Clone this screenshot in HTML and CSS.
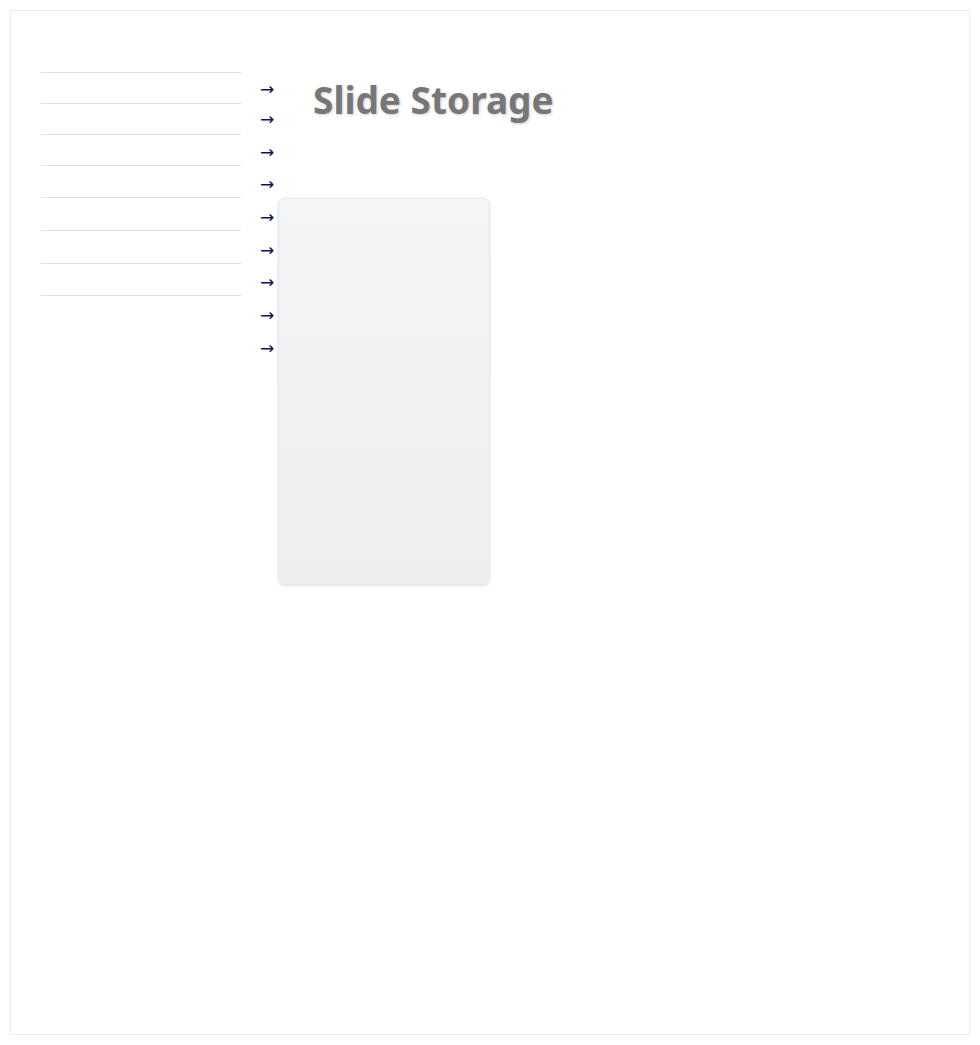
FILE: index.html
```html
<!DOCTYPE html>
<html lang="en">
	<head>
		<meta charset="UTF-8" />
		<meta name="viewport" content="width=device-width, initial-scale=1.0" />
		<title>Slide Storage</title>
		<link rel="stylesheet" href="styles.css">
	</head>
	<body>
		<div class="pagina">
			<ul class="menu">
				<li></li>
				<li></li>
				<li></li>
				<li></li>
				<li></li>
				<li></li>
				<li></li>
			</ul>
			<ul class="flechas">
				<li>&rarr;</li>
				<li>&rarr;</li>
				<li>&rarr;</li>
				<li>&rarr;</li>
				<li>&rarr;</li>
				<li>&rarr;</li>
				<li>&rarr;</li>
				<li>&rarr;</li>
				<li>&rarr;</li>
			</ul>
			<div class="contenido">
				<h1 class="titulo">Slide Storage</h1>
				<div class="tarjeta"></div>
			</div>
		</div>
	</body>
</html>
```

FILE: styles.css
```css
body {
	background-color: #fff;
	margin: 10px;
	padding: 0;
	font-family: "DejaVu Sans", sans-serif;
}
.pagina {
	display: flex;
	align-items: flex-start;
	min-height: 1025px;
	box-sizing: border-box;
	padding: 61px 0 0 30px;
	background-color: #fff;
	border: 1px solid #ececec;
	box-shadow: 0 0 8px rgba(0, 0, 0, 0.3);
}
.menu {
	list-style: none;
	margin: 0;
	padding: 0;
	width: 200px;
	border-top: 1px solid #e2e2e2;
}
.menu li {
	height: 30px;
	border-bottom: 1px solid #e2e2e2;
}
.menu li:nth-child(4),
.menu li:nth-child(7) {
	height: 31px;
}
.menu li:nth-child(5),
.menu li:nth-child(6) {
	height: 32px;
}
.flechas {
	list-style: none;
	margin: 0 0 0 19px;
	padding: 2px 0 0 0;
	width: 18px;
	color: #10105a;
	font-size: 17px;
}
.flechas li {
	height: 32.7px;
	line-height: 32.7px;
}
.flechas li:first-child {
	height: 29px;
	line-height: 30px;
}
.contenido {
	display: flex;
	flex-direction: column;
}
.titulo {
	margin: 8px 0 0 35px;
	font-family: "Noto Sans", sans-serif;
	font-weight: bold;
	font-size: 37px;
	line-height: 40px;
	color: #777;
	text-shadow: 1px 1px 3px rgba(0, 0, 0, 0.2);
}
.tarjeta {
	width: 212px;
	height: 387px;
	margin-top: 78px;
	box-sizing: border-box;
	border: 1px solid #e8e8e9;
	border-radius: 7px;
	background: linear-gradient(#f4f5f7, #eeeeef);
	box-shadow: 0 1px 3px rgba(0, 0, 0, 0.12);
}
```
